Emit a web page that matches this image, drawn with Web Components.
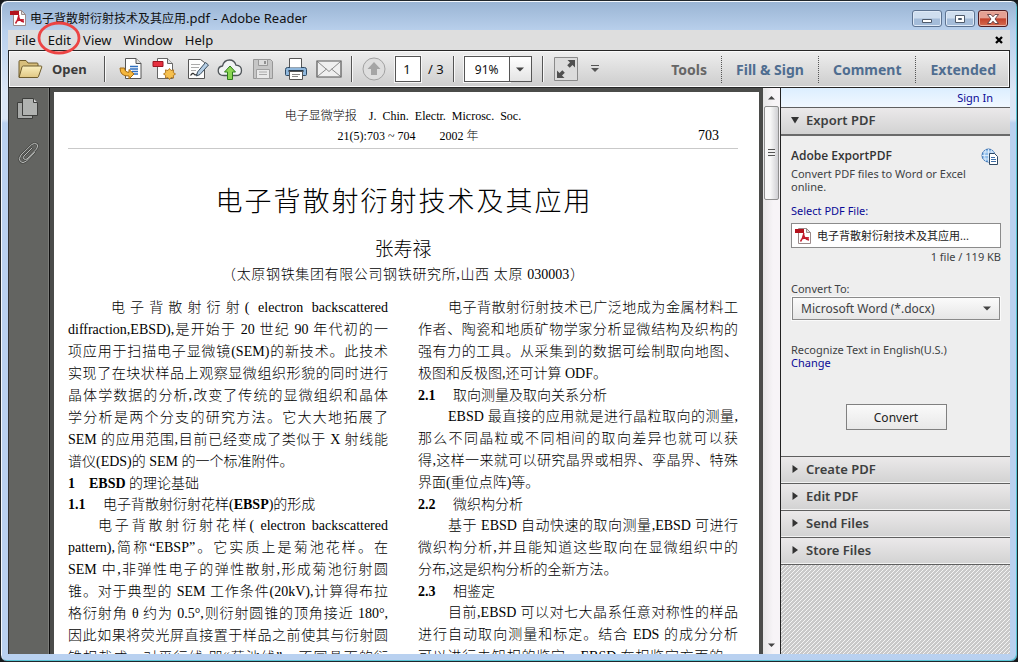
<!DOCTYPE html>
<html lang="en">
<head>
<meta charset="utf-8">
<title>电子背散射衍射技术及其应用.pdf - Adobe Reader</title>
<style>
  html, body { margin: 0; height: 100%; }
  body {
    font-family: "Noto Sans", "Noto Sans CJK SC", sans-serif;
    font-size: 12px;
    color: #111;
    background: #16191c;
    overflow: hidden;
  }
</style>
</head>
<body>
<reader-window></reader-window>

<script>
const ICONS = {
  pdf: [16, 16, `<path d="M3.5.5h8l4 4v11h-12z" fill="#fff" stroke="#9b8a8a"/><path d="M11.500.5l4 4h-4z" fill="#ddd" stroke="#9b8a8a"/><path d="M0 1h9v4H0z" fill="#b3121d"/><path d="M9 5c-.8 1.200.3 3-3.500 8.500M8.500 6c.5 4 2.500 5.500 5.500 6M6 11.500c2-1.500 5-2 8-1.500" fill="none" stroke="#c2182a" stroke-width="1.500"/>`],
  folder: [26, 22, `<path d="M2 19V3.500q0-1 1-1h6l2 2.500h9q1 0 1 1V19z" fill="#d8bf7c" stroke="#6f5c2c"/><path d="M2 19.500L5 9q.3-1 1.300-1H24q1 0 .8 1l-3.300 9.500q-.3 1-1.300 1z" fill="url(#fg)" stroke="#6f5c2c"/><defs><linearGradient id="fg" x1="0" y1="0" x2="0" y2="1"><stop offset="0" stop-color="#fbf0bf"/><stop offset="1" stop-color="#e0c783"/></linearGradient></defs>`],
  convert: [24, 24, `<path d="M6.500 1.500h10.500l5 5v15H6.500z" fill="#fff" stroke="#555"/><path d="M17 1.500v5h5" fill="#ddd" stroke="#555"/><path d="M11 9.500h8M11 12h8M13 14.500h6M15 17h4" stroke="#2f6fc0" stroke-width="1.300"/><path d="M1 11h4.500q.3 4.300 4.500 4.300v-2.800l5 4.500-5 5v-3Q1 19.500 1 11z" fill="#f4b63c" stroke="#a46a13"/>`],
  create: [24, 24, `<path d="M5.500 1.500h10l5 5v15h-15z" fill="#fff" stroke="#666"/><path d="M15.500 1.500v5h5" fill="#ddd" stroke="#666"/><path d="M1 4.500h10v5H1z" fill="#e5303f" stroke="#9e1420"/><path d="M17.500 11.500l1.500 2 2.600-.6-.3 2.600 2.200 1.500-2.200 1.500.3 2.600-2.600-.6-1.500 2-1.500-2-2.600.6.3-2.600-2.200-1.500 2.200-1.500-.3-2.600 2.600.6z" fill="#f6c04e" stroke="#ac7118" stroke-width=".9"/>`],
  edit: [24, 24, `<path d="M3.500 2.500h12l4 3v16h-16z" fill="#fdfdfd" stroke="#555"/><path d="M6 7.500h9M6 10.500h8M6 13.500h5" stroke="#aaa"/><path d="M5.500 18.500q2.500-3.500 3.500-1.500t4-.5" fill="none" stroke="#333" stroke-width="1.200"/><path d="M12.500 15L20.500 5.500l3 2.500-8.500 9.500-3.500 1.500z" fill="#b4cde4" stroke="#3c4f60"/>`],
  cloud: [26, 24, `<path d="M7 18.500q-5.800 0-5.800-4.800 0-4.200 4.300-4.700 1.500-6 7-6 5 0 6.500 5.200 5.500.3 5.500 5.200 0 5.100-5.500 5.100z" fill="#f1f3f4" stroke="#50565a" stroke-width="1.300"/><path d="M13 9l5.500 6h-3v7.500h-5V15h-3z" fill="#8bd552" stroke="#2f7d1c"/>`],
  save: [22, 22, `<path d="M1.500 1.500h17l2 2v17h-19z" fill="#c6c6c6" stroke="#979797"/><path d="M6.500 1.500h9v6h-9z" fill="#ddd" stroke="#999"/><path d="M12 3h2v3h-2z" fill="#909090"/><path d="M4.500 11.500h13v9h-13z" fill="#e9e9e9" stroke="#a0a0a0"/><path d="M7 14h8M7 16.500h8" stroke="#aaa"/>`],
  print: [24, 24, `<path d="M5.500 1.500h12v9h-12z" fill="#fff" stroke="#555"/><path d="M3.500 10.500h17q2 0 2 2v5q0 1-1 1h-19q-1 0-1-1v-5q0-2 2-2z" fill="#8fb7dc" stroke="#2f4a63"/><path d="M4.500 14h15" stroke="#27394a" stroke-width="2"/><path d="M5.500 14.500h13v8h-13z" fill="#fff" stroke="#555"/><path d="M8 17.500h8M8 19.500h6" stroke="#888"/><path d="M6 10h11" stroke="#fff"/>`],
  mail: [26, 18, `<path d="M1 1h24v16H1z" fill="#efefef" stroke="#555" stroke-width="1.200"/><path d="M2 2l11 9.500L24 2M2 16l8.500-7M24 16l-8.500-7" fill="none" stroke="#8c8c8c"/>`],
  up: [24, 24, `<circle cx="12" cy="12" r="11" fill="#dedede" stroke="#a2a2a2"/><path d="M12 5l6.500 7H15v6H9v-6H5.500z" fill="#a5a5a5"/>`],
  full: [24, 24, `<path d="M.5.5h23v23H.5z" fill="#dcdcdc" stroke="#8a8a8a"/><path d="M13.500 3H21v7.500l-2.500-2.500-2.800 2.800-2.500-2.500L16 5.500zM3 21v-7.500l2.500 2.500 2.800-2.800 2.500 2.500L8 18.500l2.500 2.500z" fill="#505050"/>`],
  more: [8, 8, `<path d="M0 .5h8" stroke="#555"/><path d="M0 3h8L4 7z" fill="#555"/>`],
  down: [8, 5, `<path d="M0 .5h8L4 4.500z" fill="#444"/>`],
  tinyup: [8, 5, `<path d="M0 4.500h7L3.500 1z" fill="#444"/>`],
  tinydown: [8, 5, `<path d="M0 .5h7L3.500 4z" fill="#444"/>`],
  pages: [22, 24, `<path d="M.5 6.500h15v16H.5z" fill="#a8aaa8" stroke="#3d3e3c"/><path d="M5.500 2.500h11l4 4v13h-15z" fill="#b0b2b0" stroke="#3d3e3c"/><path d="M16.500 2.500v4h4" fill="#d5d5d5" stroke="#3d3e3c"/>`],
  clip: [24, 24, `<g fill="none" stroke-linecap="round"><path d="M15 7l-8 8q-1.500 2 0 3t3 0l9.500-10q2.500-3.500.3-5t-5 .5L4 14q-3 4-.7 6.500t6.200-.5l8-8.500" stroke="#464744" stroke-width="2.200"/><path d="M15 7l-8 8q-1.500 2 0 3t3 0l9.500-10q2.500-3.500.3-5t-5 .5L4 14q-3 4-.7 6.500t6.200-.5l8-8.500" stroke="#babcba"/></g>`],
  globe: [18, 17, `<circle cx="7.500" cy="7.500" r="6.500" fill="#8fbdea" stroke="#3f74b3"/><path d="M1 7.500h13M2 4h11M2 11h11M7.500 1v13M4.500 1.500q-2 6 0 12M10.500 1.500q2 6 0 12" fill="none" stroke="#e8f3fd" stroke-width=".8"/><path d="M8.500 5.500h5l3 3v8h-8z" fill="#fff" stroke="#2f4964"/><path d="M10 9.500h4M10 11.500h5M10 13.500h5" stroke="#3f6ea5"/>`],
  open: [8, 8, `<path d="M0 1h8L4 7.500z" fill="#333"/>`],
  closed: [8, 8, `<path d="M1.500 0v8l5.500-4z" fill="#333"/>`],
  min: [30, 16, `<path d="M10.500 8.500h9v3h-9z" fill="#fff" stroke="#4e5a6b"/>`],
  max: [30, 16, `<path d="M10.500 4.500h9v7h-9z" fill="#fff" stroke="#4e5a6b"/><path d="M13.500 7.500h3v1h-3z" fill="#9db5d2" stroke="#4e5a6b"/>`],
  close: [30, 16, `<path d="M9.500 3.500h3.500l2 2.300 2-2.300h3.500L17 8l3.500 4.500H17l-2-2.300-2 2.300H9.500L13 8z" fill="#fff" stroke="#5b3a40" stroke-width=".9"/>`],
  cross: [8, 8, `<path d="M1 1l6 6M7 1L1 7" stroke="#000" stroke-width="2.300"/>`],
  ring: [44, 34, `<ellipse cx="22" cy="17" rx="20" ry="15" fill="none" stroke="#ec4443" stroke-width="2.800"/>`]
};

function define(name, render) {
  customElements.define(name, class extends HTMLElement {
    connectedCallback() {
      if (this.shadowRoot) return;
      this.attachShadow({ mode: "open" }).innerHTML = render(this);
    }
  });
}

define("app-icon", host => {
  const [w, h, body] = ICONS[host.getAttribute("name")];
  return `<style>:host{display:inline-block;flex:none;line-height:0}svg{display:block}</style>
    <svg width="${w}" height="${h}" viewBox="0 0 ${w} ${h}" aria-hidden="true">${body}</svg>`;
});

define("title-bar", () => `
  <style>
    :host { display: flex; align-items: flex-start; height: 28px; padding: 0 2px; }
    .name { display: flex; align-items: center; gap: 4px; flex: 1; height: 32px; font-size: 13px; white-space: nowrap; }
    .name b { font-weight: 400; font-size: 12px; }
    .buttons { display: flex; gap: 3px; padding: 8px 0 0; }
    button { padding: 0; width: 30px; height: 17px; border: 1px solid #5d7391; border-radius: 3px; overflow: hidden;
      display: flex; justify-content: center; align-items: center;
      background: linear-gradient(#cfdeef 0 48%, #a4bcd9 52% 100%); box-shadow: inset 0 0 0 1px #dfeaf7; }
    .close { border-color: #501c22; background: linear-gradient(#e5a093 0 46%, #c3422c 52%, #d56b50 100%); box-shadow: inset 0 0 0 1px #e9b3a6; }
  </style>
  <div class="name"><app-icon name="pdf"></app-icon><span><b>电子背散射衍射技术及其应用</b>.pdf - Adobe Reader</span></div>
  <div class="buttons">
    <button aria-label="Minimize"><app-icon name="min"></app-icon></button>
    <button aria-label="Maximize"><app-icon name="max"></app-icon></button>
    <button class="close" aria-label="Close"><app-icon name="close"></app-icon></button>
  </div>`);

define("menu-item", host => `
  <style>
    :host { display: block; position: relative; }
    button { display: block; font: inherit; color: #111; border: 0; background: none; padding: 0; height: 20px; line-height: 19px; }
    .ring { position: absolute; left: 50%; top: 50%; margin: -19px 0 0 -22px; pointer-events: none; z-index: 2; }
  </style>
  <button><slot></slot></button>${host.hasAttribute("marked") ? '<app-icon class="ring" name="ring"></app-icon>' : ""}`);

define("menu-bar", () => `
  <style>
    :host { display: flex; align-items: center; height: 20px; gap: 12px; padding: 0 7px; background: #dedede; font-size: 13px; }
    .x { margin-left: auto; border: 0; background: none; padding: 0; display: flex; }
  </style>
  <menu-item>File</menu-item><menu-item marked>Edit</menu-item><menu-item>View</menu-item>
  <menu-item>Window</menu-item><menu-item>Help</menu-item>
  <button class="x" aria-label="Close document"><app-icon name="cross"></app-icon></button>`);

define("tool-bar", () => `
  <style>
    :host { display: flex; align-items: center; height: 36px; border: 1px solid #262626; box-shadow: inset 0 0 0 1px #fafafa;
      background: linear-gradient(#eeeeee, #cdcdcd); }
    button { font: inherit; color: inherit; border: 0; background: none; padding: 0; display: flex; align-items: center; justify-content: center; }
    .open { gap: 9px; padding-left: 8px; width: 95px; box-sizing: border-box; justify-content: flex-start; font-weight: 700; font-size: 13px; color: #3b3b3b; }
    .sep { width: 1px; height: 26px; background: #555; box-shadow: 1px 0 #f8f8f8; flex: none; }
    .icons { display: flex; padding: 0 6px 0 9px; }
    .icons button { width: 33px; height: 28px; }
    .pages { display: flex; align-items: center; padding: 0 9px 0 10px; }
    input { font: inherit; font-size: 13px; box-sizing: border-box; border: 1px solid #555; background: #fff; color: #111; margin: 0; height: 26px; padding: 0; text-align: center; outline: 1px solid #f6f6f6; }
    .num { width: 26px; margin: 0 7px 0 9px; padding: 0 2px 0 0; }
    .total { font-size: 13px; }
    .zoom { display: flex; margin: 0 10px; }
    .zoom input { width: 46px; font-size: 12px; }
    .zoom button { width: 22px; border: 1px solid #555; border-left: 0; background: linear-gradient(#fff, #e4e4e4); }
    .full { margin: 0 13px 0 11px; }
    nav { margin-left: auto; display: flex; }
    nav button { height: 27px; padding: 0 14px; border-left: 1px dotted #555; font-size: 14px; font-weight: 700; color: #4f6d90; font-family: "Noto Sans", sans-serif; }
    nav button:first-child { border: 0; color: #666; }
    nav button:last-child { padding-right: 13px; }
  </style>
  <button class="open"><app-icon name="folder"></app-icon>Open</button>
  <span class="sep"></span>
  <div class="icons">${["convert","create","edit","cloud","save","print","mail"].map(n => `<button aria-label="${n}"><app-icon name="${n}"></app-icon></button>`).join("")}</div>
  <span class="sep"></span>
  <div class="pages"><button aria-label="Previous page"><app-icon name="up"></app-icon></button>
    <input class="num" aria-label="Page number" value="1"><span class="total">/ 3</span></div>
  <span class="sep"></span>
  <div class="zoom"><input aria-label="Zoom" value="91%"><button aria-label="Zoom levels"><app-icon name="down"></app-icon></button></div>
  <span class="sep"></span>
  <button class="full" aria-label="Read mode"><app-icon name="full"></app-icon></button>
  <button aria-label="More tools"><app-icon name="more"></app-icon></button>
  <nav><button>Tools</button><button>Fill &amp; Sign</button><button>Comment</button><button>Extended</button></nav>`);

define("nav-rail", () => `
  <style>
    :host { display: flex; flex-direction: column; align-items: flex-start; gap: 18px; flex: none; width: 41px; box-sizing: border-box; padding: 8px 0 0 8px; background: #636461; border-right: 1px solid #111; box-shadow: inset -1px 0 #7b7c79; }
    button { border: 0; background: none; padding: 0; }
  </style>
  <button aria-label="Page thumbnails"><app-icon name="pages"></app-icon></button>
  <button aria-label="Attachments"><app-icon name="clip"></app-icon></button>`);

define("text-column", () => `<style>:host{display:block;min-width:0}</style><slot></slot>`);
define("text-line", () => `
  <style>
    :host { display: block; height: 22px; line-height: 22px; white-space: nowrap; text-align: justify; text-align-last: justify; }
    :host([end]) { text-align-last: left; }
    :host([heading]) { height: 21px; line-height: 21px; text-align-last: left; }
    :host([heading]) slot { white-space: pre; }
    :host([indent]) { padding-left: 30px; }
    :host([deep]) { padding-left: 43px; }
  </style><slot></slot>`);

define("journal-page", () => `
  <style>
    :host { display: block; background: #fff; padding: 14px 21px 0 14px; color: #000;
      font-family: "Liberation Serif", "Noto Sans CJK SC", serif; font-weight: 300; font-size: 14px; }
    b { font-weight: 700; }
    header { border-bottom: 1px solid #c9c9c9; font-size: 12px; line-height: 20px; height: 42px; }
    header p { margin: 0; text-align: center; white-space: pre; }
    .issue { display: grid; grid-template-columns: 1fr auto 1fr; align-items: center; }
    .issue span:nth-child(2) { padding-left: 10px; }
    .issue .no { text-align: right; font-size: 14px; padding-right: 19px; }
    h1 { font-weight: 300; font-size: 27px; line-height: 40px; margin: 33px auto 0; width: 56%; text-align-last: justify; white-space: nowrap; }
    .author { margin: 16px 0 0; font-size: 19px; line-height: 24px; text-align: center; }
    .place { margin: 0 auto 9px; width: 54%; line-height: 26px; text-align-last: justify; white-space: nowrap; }
    .cols { display: grid; grid-template-columns: 1fr 1fr; gap: 30px; }
  </style>
  <header>
    <p>电子显微学报    J.  Chin.  Electr.  Microsc.  Soc.</p>
    <p class="issue"><span></span><span>21(5):703 ~ 704        2002 年</span><span class="no">703</span></p>
  </header>
  <h1>电子背散射衍射技术及其应用</h1>
  <p class="author">张寿禄</p>
  <p class="place">（太原钢铁集团有限公司钢铁研究所,山西 太原 030003）</p>
  <div class="cols">
    <text-column>
      <text-line deep>电子背散射衍射( electron backscattered</text-line>
      <text-line>diffraction,EBSD),是开始于 20 世纪 90 年代初的一</text-line>
      <text-line>项应用于扫描电子显微镜(SEM)的新技术。此技术</text-line>
      <text-line>实现了在块状样品上观察显微组织形貌的同时进行</text-line>
      <text-line>晶体学数据的分析,改变了传统的显微组织和晶体</text-line>
      <text-line>学分析是两个分支的研究方法。它大大地拓展了</text-line>
      <text-line>SEM 的应用范围,目前已经变成了类似于 X 射线能</text-line>
      <text-line end>谱仪(EDS)的 SEM 的一个标准附件。</text-line>
      <text-line heading><b>1    EBSD</b> 的理论基础</text-line>
      <text-line heading><b>1.1</b>     电子背散射衍射花样(<b>EBSP</b>)的形成</text-line>
      <text-line indent>电子背散射衍射花样( electron backscattered</text-line>
      <text-line>pattern),简称“EBSP”。它实质上是菊池花样。在</text-line>
      <text-line>SEM 中,非弹性电子的弹性散射,形成菊池衍射圆</text-line>
      <text-line>锥。对于典型的 SEM 工作条件(20kV),计算得布拉</text-line>
      <text-line>格衍射角 θ 约为 0.5°,则衍射圆锥的顶角接近 180°,</text-line>
      <text-line>因此如果将荧光屏直接置于样品之前使其与衍射圆</text-line>
      <text-line>锥相截成一对平行线,即“菊池线”。不同晶面的衍</text-line>
    </text-column>
    <text-column>
      <text-line indent>电子背散射衍射技术已广泛地成为金属材料工</text-line>
      <text-line>作者、陶瓷和地质矿物学家分析显微结构及织构的</text-line>
      <text-line>强有力的工具。从采集到的数据可绘制取向地图、</text-line>
      <text-line end>极图和反极图,还可计算 ODF。</text-line>
      <text-line heading><b>2.1</b>     取向测量及取向关系分析</text-line>
      <text-line indent>EBSD 最直接的应用就是进行晶粒取向的测量,</text-line>
      <text-line>那么不同晶粒或不同相间的取向差异也就可以获</text-line>
      <text-line>得,这样一来就可以研究晶界或相界、孪晶界、特殊</text-line>
      <text-line end>界面(重位点阵)等。</text-line>
      <text-line heading><b>2.2</b>     微织构分析</text-line>
      <text-line indent>基于 EBSD 自动快速的取向测量,EBSD 可进行</text-line>
      <text-line>微织构分析,并且能知道这些取向在显微组织中的</text-line>
      <text-line end>分布,这是织构分析的全新方法。</text-line>
      <text-line heading><b>2.3</b>     相鉴定</text-line>
      <text-line indent>目前,EBSD 可以对七大晶系任意对称性的样品</text-line>
      <text-line>进行自动取向测量和标定。结合 EDS 的成分分析</text-line>
      <text-line>可以进行未知相的鉴定。EBSD 在相鉴定方面的一</text-line>
    </text-column>
  </div>`);

define("scroll-track", () => `
  <style>
    :host { display: flex; flex-direction: column; flex: none; width: 18px; box-sizing: border-box; border-right: 1px solid #222; background: linear-gradient(90deg, #e6e6e6, #f7f4f7 60%); }
    button { border: 0; background: none; padding: 0; height: 18px; display: flex; justify-content: center; align-items: center; }
    .thumb { height: 94px; box-sizing: border-box; margin: 0 1px 0 1px; border: 1px solid #8f8f8f; border-radius: 2px; background: linear-gradient(90deg, #f8f8f8 0 40%, #cfcfd3); display: flex; align-items: center; justify-content: center; }
    .grip { width: 7px; height: 8px; background: repeating-linear-gradient(#555 0 1px, #f0f0f0 1px 3px); }
    .rest { flex: 1; }
  </style>
  <button aria-label="Scroll up"><app-icon name="tinyup"></app-icon></button>
  <div class="thumb"><div class="grip"></div></div><div class="rest"></div>
  <button aria-label="Scroll down"><app-icon name="tinydown"></app-icon></button>`);

define("panel-section", host => `
  <style>
    :host { display: block; }
    .head { display: flex; align-items: center; gap: 7px; width: 100%; height: 27px; padding: 0 0 2px 10px; box-sizing: border-box; border: 0; border-bottom: 1px solid #5f5f5f;
      background: linear-gradient(#ebe9ea, #d2d2d2); box-shadow: inset 0 -1px #f2f2f2; font: 600 13px "Noto Sans", sans-serif; color: #3d3f40; text-align: left; }
    :host([expanded]) .head { height: 28px; border-bottom: 2px solid #6a6a6a; box-shadow: none; }
  </style>
  <button class="head" aria-expanded="${host.hasAttribute("expanded")}"><app-icon name="${host.hasAttribute("expanded") ? "open" : "closed"}"></app-icon>${host.getAttribute("label")}</button>
  <slot></slot>`);

define("export-form", () => `
  <style>
    :host { display: block; background: #eee; border-bottom: 1px solid #5f5f5f; padding: 12px 9px 26px 10px; font-size: 11px; line-height: 13px; color: #404244; }
    .top { display: flex; justify-content: space-between; height: 19px; padding-right: 2px; }
    h2 { margin: 0; font: 600 12px/16px "Open Sans", sans-serif; color: #333; }
    p { margin: 0; }
    a { color: #0a0a96; text-decoration: none; }
    .pick { display: block; margin: 11px 0 5px; line-height: 14px; }
    .file { display: flex; align-items: center; gap: 6px; height: 25px; box-sizing: border-box; border: 1px solid #8b8b8b; background: #fff; padding-left: 3px; color: #222; font-size: 11px; white-space: nowrap; }
    .size { text-align: right; margin-top: 2px; }
    label { display: block; margin: 19px 0 1px; }
    .choice { position: relative; }
    select { appearance: none; display: block; width: 100%; height: 25px; box-sizing: border-box; border: 2px solid #fafafa; outline: 1px solid #8a8a8a; outline-offset: -2px; border-radius: 0; background: linear-gradient(#fbfbfb, #e6e6e6); font: inherit; font-size: 12px; padding: 0 8px; color: #404244; }
    .choice app-icon { position: absolute; right: 10px; top: 10px; pointer-events: none; }
    .ocr { margin-top: 22px; }
    .go { display: flex; justify-content: center; margin-top: 35px; }
    .go button { width: 101px; height: 26px; border: 1px solid #808080; background: linear-gradient(#fafafa, #e8e8e8); font: inherit; font-size: 12px; color: #222; padding: 0; }
  </style>
  <div class="top"><h2>Adobe ExportPDF</h2><app-icon name="globe"></app-icon></div>
  <p>Convert PDF files to Word or Excel<br>online.</p>
  <a class="pick" href="#file">Select PDF File:</a>
  <div class="file"><app-icon name="pdf"></app-icon><span>电子背散射衍射技术及其应用...</span></div>
  <p class="size">1 file / 119 KB</p>
  <label for="to">Convert To:</label>
  <div class="choice"><select id="to"><option>Microsoft Word (*.docx)</option></select><app-icon name="down"></app-icon></div>
  <p class="ocr">Recognize Text in English(U.S.)</p>
  <p><a href="#change">Change</a></p>
  <div class="go"><button>Convert</button></div>`);

define("side-panel", () => `
  <style>
    :host { display: flex; flex-direction: column; flex: none; width: 229px;
      background: linear-gradient(135deg, #c9c9c9 38%, #f4f4f4 38% 62%, #c9c9c9 62%) 0 0 / 4px 4px; }
    .sign { height: 19px; line-height: 19px; text-align: right; padding-right: 17px; background: linear-gradient(#dceeff, #f1f8ff); border-bottom: 1px solid #5f5f5f; font-size: 11px; }
    a { color: #0a0a96; text-decoration: none; }
  </style>
  <div class="sign"><a href="#signin">Sign In</a></div>
  <panel-section label="Export PDF" expanded><export-form></export-form></panel-section>
  <panel-section label="Create PDF"></panel-section>
  <panel-section label="Edit PDF"></panel-section>
  <panel-section label="Send Files"></panel-section>
  <panel-section label="Store Files"></panel-section>`);

define("reader-window", () => `
  <style>
    :host { display: flex; flex-direction: column; height: 100vh; box-sizing: border-box; border: 1px solid #20262b; border-radius: 7px; padding: 1px 7px 7px;
      background: linear-gradient(#99b4d3, #b9d0ec 30px, #dbe6f5 90px, #dbe6f5 118px, #b9d1f0 122px);
      box-shadow: inset 1px 1px 0 #f4f8fc, inset -1px -1px 0 #58c4d4; }
    main { display: flex; flex: 1; min-height: 0; border-left: 1px solid #333; }
    .view { flex: 1; min-width: 0; overflow: hidden; background: #4b4c4a; padding: 4px 4px 0 4px; }
  </style>
  <title-bar></title-bar><menu-bar></menu-bar><tool-bar></tool-bar>
  <main>
    <nav-rail></nav-rail>
    <div class="view"><journal-page></journal-page></div>
    <scroll-track></scroll-track>
    <side-panel></side-panel>
  </main>`);
</script>
</body>
</html>
